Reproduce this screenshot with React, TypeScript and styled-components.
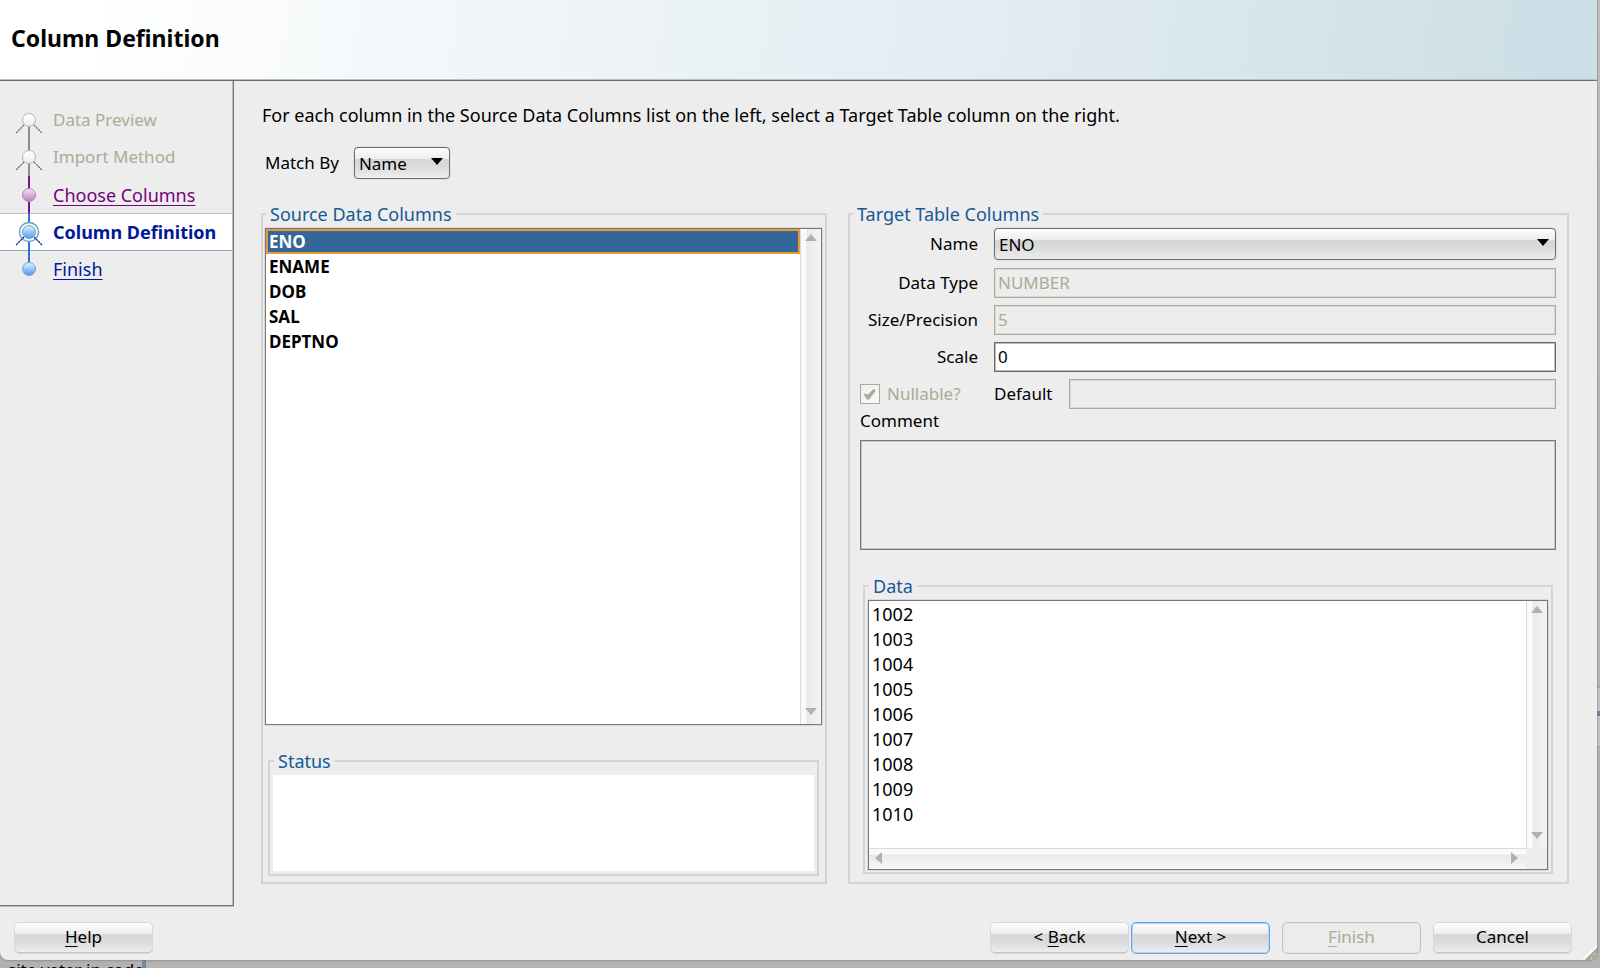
import React from "react";
import styled, { createGlobalStyle, css } from "styled-components";

const SANS = '"Noto Sans", "Open Sans", sans-serif';

const Global = createGlobalStyle`
  *, *::before, *::after { box-sizing: border-box; }
  body { margin: 0; font: 17px/24px ${SANS}; color: #000; background: #b0b0b0; }
  button, input, select, textarea { font: inherit; color: inherit; }
`;

const glossy = css`
  background: linear-gradient(#fdfdfd 0, #ededed 36%, #d6d6d6 38%, #dadada 60%, #eeeeee 100%);
`;

const Desktop = styled.div`
  position: relative;
  min-height: 100vh;
  display: flex;
  flex-direction: column;
  padding: 0 3px 8px 0;
  overflow: hidden;
  background: linear-gradient(#c2c2c2, #b4b4b4);
`;

const Behind = styled.div`
  position: absolute;
  left: 0;
  bottom: -14px;
  width: 146px;
  padding-left: 8px;
  border-right: 4px solid #6d8aa8;
  background: #b2b2b2;
  white-space: nowrap;
`;

const BehindEdge = styled.div`
  position: absolute;
  right: 0;
  top: 687px;
  width: 3px;
  height: 60px;
  border-top: 1px solid #a5a5a5;
  border-bottom: 1px solid #a5a5a5;
  background: linear-gradient(#c9c9c9 23px, #6985a8 23px, #6985a8 28px, #c9c9c9 28px);
`;

const Window = styled.div`
  position: relative;
  flex: 1;
  display: flex;
  flex-direction: column;
  background: #ededed;
  border-radius: 0 0 8px 8px;
  overflow: hidden;
  box-shadow: 0 0 3px #707070;
`;

const Header = styled.header`
  height: 81px;
  display: flex;
  align-items: center;
  padding: 0 11px 4px;
  border-bottom: 1px solid #6e6e6e;
  box-shadow: inset 0 -1px #b9c0c4;
  background: linear-gradient(98deg, #fff 6%, #f0f5f8 32%, #e2ecf2 62%, #cddfe6 96%);
`;

const Title = styled.h1`
  margin: 0;
  font-size: 23px;
  line-height: 32px;
  font-weight: 700;
`;

const Body = styled.div`
  flex: 1;
  display: flex;
`;

const Sidebar = styled.nav`
  width: 234px;
  flex: none;
  padding-top: 20px;
  border: solid #767676;
  border-width: 0 1px 1px 0;
  box-shadow: inset -1px 0 #bdbdbd, 0 1px #bdbdbd;
`;

const Steps = styled.ol`
  list-style: none;
  margin: 0;
  padding: 0;
  height: 187px;
  display: flex;
  flex-direction: column;
`;

type StepState = "disabled" | "visited" | "current" | "next";
const stepColor: Record<StepState, string> = {
  disabled: "#abab97",
  visited: "#750080",
  current: "#00189a",
  next: "#00189a",
};

const StepRow = styled.li<{ $state: StepState }>`
  flex: 1 1 0;
  min-height: 0;
  display: flex;
  align-items: center;
  gap: 5px;
  margin-right: 1px;
  font-size: ${(p) => (p.$state === "disabled" ? 17 : 18)}px;
  color: ${(p) => stepColor[p.$state]};
  ${(p) =>
    p.$state === "current" &&
    css`
      font-weight: 700;
      background: #fff;
      box-shadow: inset 0 1px #b4c0d0, inset 0 -1px #8ba3c6;
    `}
  a { color: inherit; text-underline-offset: 3px; text-decoration-thickness: 1px; }
`;

const Track = styled.svg`
  width: 48px;
  height: 38px;
  flex: none;
  display: block;
`;

const Content = styled.main`
  flex: 1;
  min-width: 0;
  display: flex;
  flex-direction: column;
  padding: 22px 28px 22px 27px;
`;

const Intro = styled.p`
  margin: 0 1px;
  font-size: 18px;
`;

const MatchRow = styled.div`
  display: flex;
  align-items: center;
  gap: 15px;
  margin: 20px 0 23px 4px;
`;

const SelectBox = styled.div<{ $width?: string }>`
  position: relative;
  width: ${(p) => p.$width ?? "100%"};
  select {
    appearance: none;
    display: block;
    width: 100%;
    height: 32px;
    padding: 1px 28px 0 4px;
    border: 1px solid #6c6c6c;
    border-radius: 4px;
    box-shadow: 0 0 1px #888;
    ${glossy}
  }
  svg { position: absolute; right: 7px; top: 11px; pointer-events: none; }
`;

const Panels = styled.div`
  flex: 1;
  display: grid;
  grid-template-columns: 566fr 721fr;
  gap: 21px;
`;

const Group = styled.fieldset<{ $pad?: string; $grow?: boolean }>`
  min-width: 0;
  margin: 0;
  padding: ${(p) => p.$pad ?? "2px 3px 0"};
  border: 2px solid #d4d4d4;
  display: flex;
  flex-direction: column;
  flex: ${(p) => (p.$grow ? "1" : "none")};
  legend { padding: 0 4px; margin-left: 1px; color: #155a96; font-size: 18px; }
`;

const ListBox = styled.div`
  flex: 1;
  display: grid;
  grid-template-columns: 1fr 21px;
  grid-template-rows: 1fr auto;
  border: 1px solid #777;
  box-shadow: 0 0 1px #777;
  background: #fff;
`;

const Items = styled.ul<{ $bold?: boolean }>`
  list-style: none;
  margin: 0;
  padding: 0;
  font-size: ${(p) => (p.$bold ? 17 : 18)}px;
  font-weight: ${(p) => (p.$bold ? 700 : 400)};
`;

const Item = styled.li<{ $selected?: boolean }>`
  height: 25px;
  padding: 0 2px;
  border: 1px solid transparent;
  line-height: 24px;
  ${(p) =>
    p.$selected &&
    css`
      color: #fff;
      background: #336699;
      border: 2px solid #e79a35;
      padding: 0 1px;
      line-height: 22px;
    `}
`;

const VScroll = styled.div`
  display: flex;
  flex-direction: column;
  justify-content: space-between;
  align-items: center;
  padding: 5px 0 9px;
  border-left: 1px solid #dadada;
  background: linear-gradient(90deg, #fafafa 5px, #e9e9e9 6px, #f5f5f5);
`;

const HScroll = styled.div`
  height: 21px;
  display: flex;
  justify-content: space-between;
  align-items: center;
  padding: 0 8px 3px 6px;
  border-top: 1px solid #dadada;
  background: linear-gradient(#fafafa 5px, #e9e9e9 6px, #f8f8f8);
`;

const Corner = styled.div`
  background: #ededed;
`;

const StatusWrap = styled.div`
  margin: 24px 3px 0;
`;

const StatusArea = styled.textarea`
  display: block;
  width: 100%;
  height: 96px;
  border: 0;
  padding: 4px;
  resize: none;
  background: #fff;
`;

const Form = styled.div`
  display: grid;
  grid-template-columns: 118px 1fr;
  column-gap: 16px;
  row-gap: 8px;
  align-items: center;
  padding: 0 9px 0 8px;
`;

const Label = styled.label`
  text-align: right;
  white-space: nowrap;
`;

const Field = styled.input`
  display: block;
  width: 100%;
  min-width: 0;
  height: 30px;
  padding: 0 3px 2px;
  border: 1px solid #686868;
  border-radius: 0;
  outline: 1px solid #bcbcbc;
  outline-offset: -2px;
  background: #fff;
  &:disabled {
    color: #abab97;
    border-color: #abab97;
    outline-color: #dadad2;
    background: #ededed;
  }
`;

const TextFields = styled(Form)`
  row-gap: 7px;
  padding-top: 8px;
`;

const CheckLabel = styled.label`
  display: flex;
  align-items: center;
  gap: 7px;
  color: #abab97;
  white-space: nowrap;
`;

const Check = styled.span`
  position: relative;
  width: 20px;
  height: 20px;
  input {
    appearance: none;
    display: block;
    margin: 0;
    width: 20px;
    height: 20px;
    border: 1px solid #abab97;
    background: linear-gradient(135deg, #eee, #fafafa);
  }
  svg { position: absolute; left: 0; top: 0; }
`;

const DefaultRow = styled.div`
  display: flex;
  align-items: center;
  gap: 17px;
`;

const CommentBlock = styled.div`
  display: flex;
  flex-direction: column;
  padding: 0 9px 0 8px;
  label { line-height: 24px; margin-bottom: 7px; }
`;

const Comment = styled.textarea`
  display: block;
  width: 100%;
  height: 110px;
  padding: 3px;
  border: 1px solid #777;
  resize: none;
  background: #ededed;
  outline: 1px solid #c4c4c4;
  outline-offset: -2px;
`;

const DataWrap = styled.div`
  flex: 1;
  display: flex;
  margin: 24px 12px 8px 11px;
`;

const Footer = styled.footer`
  display: flex;
  align-items: center;
  padding: 16px 25px 6px 14px;
`;

const Spacer = styled.div`
  flex: 1;
`;

const Button = styled.button<{ $primary?: boolean; $gap?: number }>`
  width: 139px;
  height: 32px;
  margin-left: ${(p) => p.$gap ?? 0}px;
  padding: 0 0 3px;
  border: 1px solid ${(p) => (p.$primary ? "#64a4e6" : "#d6d6d6")};
  border-radius: 5px;
  box-shadow: ${(p) => (p.$primary ? "inset 0 0 0 1px #b4d4f4" : "inset 0 -1px #c6c6c6")};
  ${glossy}
  u { text-underline-offset: 3px; text-decoration-thickness: 1px; }
  &:disabled {
    color: #abab97;
    border-color: #c0c3c0;
    box-shadow: inset 0 0 1px #c0c3c0;
    background: #ebeceb;
  }
`;

const Grip = styled.svg`
  position: absolute;
  right: 0;
  bottom: 0;
`;

const DIRS = { up: "M0 7L6 0L12 7Z", down: "M0 0H12L6 7Z", left: "M7 0V12L0 6Z", right: "M0 0V12L7 6Z" };

function Arrow({ dir, color = "#b0b0b0" }: { dir: keyof typeof DIRS; color?: string }) {
  const upright = dir === "up" || dir === "down";
  return (
    <svg width={upright ? 12 : 7} height={upright ? 7 : 12} aria-hidden="true">
      <path d={DIRS[dir]} fill={color} />
    </svg>
  );
}

const lineColors = { grey: "#8e8e8e", purple: "#7a1296", blue: "#2f6fe0" };
type LineColor = keyof typeof lineColors;

interface Step {
  label: string;
  state: StepState;
  up?: LineColor;
  down?: LineColor;
}

const steps: Step[] = [
  { label: "Data Preview", state: "disabled", down: "grey" },
  { label: "Import Method", state: "disabled", up: "grey", down: "grey" },
  { label: "Choose Columns", state: "visited", up: "purple", down: "purple" },
  { label: "Column Definition", state: "current", up: "blue", down: "blue" },
  { label: "Finish", state: "next", up: "blue" },
];

const nodeFill: Record<StepState, [string, string, string]> = {
  disabled: ["#ffffff", "#e6ecf2", "#b0b4b8"],
  visited: ["#f0dcf0", "#b87cc0", "#a48cac"],
  current: ["#d8ecff", "#4a98f0", "#6fa0d0"],
  next: ["#d8ecff", "#4a98f0", "#7ba4cc"],
};

function StepTrack({ step }: { step: Step }) {
  const [light, deep, rim] = nodeFill[step.state];
  const id = `node-${step.state}`;
  const forked = step.state === "disabled" || step.state === "current";
  return (
    <Track viewBox="0 0 48 38" aria-hidden="true">
      <defs>
        <linearGradient id={id} x1="0" y1="0" x2="0" y2="1">
          <stop offset="0.1" stopColor={light} />
          <stop offset="1" stopColor={deep} />
        </linearGradient>
      </defs>
      {step.up && <rect x="28" y="0" width="2" height="13" fill={lineColors[step.up]} />}
      {step.down && <rect x="28" y="26" width="2" height="12" fill={lineColors[step.down]} />}
      {step.state === "current" && (
        <circle cx="29" cy="19" r="9.5" fill="#fff" stroke="#62a0cc" strokeWidth="1.4" />
      )}
      {forked && (
        <path
          d="M24 24L16 32M34 24L42 32"
          stroke={step.state === "current" ? "#10189a" : "#707070"}
          strokeWidth="1.3"
          strokeDasharray="2.2 0.8"
        />
      )}
      <circle cx="29" cy="19" r="6.5" fill={`url(#${id})`} stroke={rim} strokeWidth="1" />
    </Track>
  );
}

const columns = ["ENO", "ENAME", "DOB", "SAL", "DEPTNO"];
const rows = ["1002", "1003", "1004", "1005", "1006", "1007", "1008", "1009", "1010"];

export default function App() {
  return (
    <>
      <Global />
      <Desktop>
        <Behind aria-hidden="true">site veter in code</Behind>
        <BehindEdge />
        <Window>
          <Header>
            <Title>Column Definition</Title>
          </Header>
          <Body>
            <Sidebar aria-label="Wizard steps">
              <Steps>
                {steps.map((s) => (
                  <StepRow key={s.label} $state={s.state}>
                    <StepTrack step={s} />
                    {s.state === "visited" || s.state === "next" ? <a href="#step">{s.label}</a> : <span>{s.label}</span>}
                  </StepRow>
                ))}
              </Steps>
            </Sidebar>
            <Content>
              <Intro>
                For each column in the Source Data Columns list on the left, select a Target Table column on the right.
              </Intro>
              <MatchRow>
                <label htmlFor="match">Match By</label>
                <SelectBox $width="96px">
                  <select id="match" defaultValue="Name">
                    <option>Name</option>
                  </select>
                  <Arrow dir="down" color="#000" />
                </SelectBox>
              </MatchRow>
              <Panels>
                <Group $pad="2px 3px 6px 2px">
                  <legend>Source Data Columns</legend>
                  <ListBox>
                    <Items $bold>
                      {columns.map((c, i) => (
                        <Item key={c} $selected={i === 0}>
                          {c}
                        </Item>
                      ))}
                    </Items>
                    <VScroll>
                      <Arrow dir="up" />
                      <Arrow dir="down" />
                    </VScroll>
                  </ListBox>
                  <StatusWrap>
                    <Group $pad="2px 3px 3px">
                      <legend>
                        <label htmlFor="status">Status</label>
                      </legend>
                      <StatusArea id="status" readOnly />
                    </Group>
                  </StatusWrap>
                </Group>
                <Group $pad="2px 2px 0">
                  <legend>Target Table Columns</legend>
                  <Form>
                    <Label htmlFor="name">Name</Label>
                    <SelectBox>
                      <select id="name" defaultValue="ENO">
                        {columns.map((c) => (
                          <option key={c}>{c}</option>
                        ))}
                      </select>
                      <Arrow dir="down" color="#000" />
                    </SelectBox>
                  </Form>
                  <TextFields>
                    <Label htmlFor="type">Data Type</Label>
                    <Field id="type" defaultValue="NUMBER" disabled />
                    <Label htmlFor="size">Size/Precision</Label>
                    <Field id="size" defaultValue="5" disabled />
                    <Label htmlFor="scale">Scale</Label>
                    <Field id="scale" defaultValue="0" />
                    <CheckLabel>
                      <Check>
                        <input type="checkbox" defaultChecked disabled />
                        <svg width="20" height="20" aria-hidden="true">
                          <path d="M4 10L8 11L14 5L15 7L9 15L7 15Z" fill="#abab97" stroke="#abab97" />
                        </svg>
                      </Check>
                      Nullable?
                    </CheckLabel>
                    <DefaultRow>
                      <label htmlFor="default">Default</label>
                      <Field id="default" disabled />
                    </DefaultRow>
                  </TextFields>
                  <CommentBlock>
                    <label htmlFor="comment">Comment</label>
                    <Comment id="comment" readOnly />
                  </CommentBlock>
                  <DataWrap>
                    <Group $grow $pad="2px 3px">
                      <legend>Data</legend>
                      <ListBox>
                        <Items>
                          {rows.map((r) => (
                            <Item key={r}>{r}</Item>
                          ))}
                        </Items>
                        <VScroll>
                          <Arrow dir="up" />
                          <Arrow dir="down" />
                        </VScroll>
                        <HScroll>
                          <Arrow dir="left" />
                          <Arrow dir="right" />
                        </HScroll>
                        <Corner />
                      </ListBox>
                    </Group>
                  </DataWrap>
                </Group>
              </Panels>
            </Content>
          </Body>
          <Footer>
            <Button><u>H</u>elp</Button>
            <Spacer />
            <Button>&lt; <u>B</u>ack</Button>
            <Button $primary $gap={2}><u>N</u>ext &gt;</Button>
            <Button disabled $gap={12}><u>F</u>inish</Button>
            <Button $gap={12}>Cancel</Button>
          </Footer>
          <Grip width="14" height="14" aria-hidden="true">
            <path d="M14 0V14H0Z" fill="#abab97" />
            <path d="M14 0L0 14" stroke="#fff" strokeWidth="2" />
            <path d="M11 8h1M8 12h1M12 12h1" stroke="#fff" strokeWidth="1" />
          </Grip>
        </Window>
      </Desktop>
    </>
  );
}
